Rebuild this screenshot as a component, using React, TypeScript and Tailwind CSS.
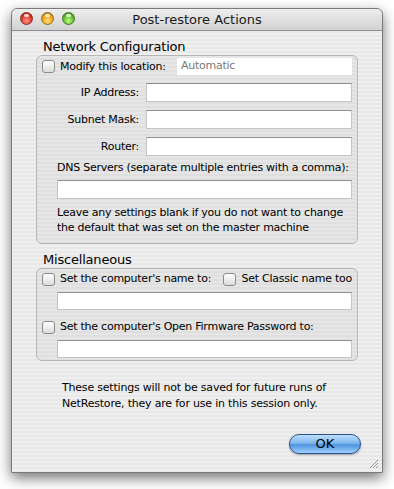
import React from 'react';

// Aqua-style "Post-restore Actions" sheet

const stripes =
  'bg-[repeating-linear-gradient(180deg,#efefef_0px,#efefef_2px,#e8e8e8_2px,#e8e8e8_4px)]';
const groupStripes =
  'bg-[repeating-linear-gradient(180deg,#e6e6e6_0px,#e6e6e6_2px,#dfdfdf_2px,#dfdfdf_4px)]';

function Checkbox() {
  return (
    <span className="inline-block w-[13px] h-[13px] shrink-0 rounded-[3px] border border-[#8a8a8a] bg-gradient-to-b from-[#ffffff] to-[#dcdcdc] shadow-[inset_0_1px_1px_rgba(255,255,255,0.8)]" />
  );
}

function Field({ value, className = '' }: { value?: string; className?: string }) {
  return (
    <div
      className={`bg-white border border-[#c4c4c4] border-t-[#8e8e8e] text-[11px] text-[#7a7a7a] px-[4px] leading-[15px] ${className}`}
    >
      {value}
    </div>
  );
}

function Light({ color }: { color: 'red' | 'orange' | 'green' }) {
  const cls = {
    red: 'bg-[radial-gradient(circle_at_50%_70%,#ff9a8a_0%,#e3352a_55%,#9c1a12_100%)] border-[#8a2a22]',
    orange: 'bg-[radial-gradient(circle_at_50%_70%,#ffe27a_0%,#f0a21e_55%,#a86a08_100%)] border-[#9a6a1a]',
    green: 'bg-[radial-gradient(circle_at_50%_70%,#c8ff8a_0%,#5cbc2a_55%,#2f7a10_100%)] border-[#3a7a22]',
  }[color];
  return (
    <span className={`relative w-[13px] h-[13px] rounded-full border ${cls}`}>
      <span className="absolute left-[3px] top-[1px] w-[5px] h-[3px] rounded-full bg-white/80" />
    </span>
  );
}

export default function App() {
  return (
    <div className="w-[394px] h-[489px] bg-white pt-[8px] pl-[11px] font-['Lucida_Grande','DejaVu_Sans',sans-serif] text-black">
      <div
        className={`relative w-[372px] h-[465px] border border-[#7a7a7a] rounded-t-[6px] shadow-[0_5px_14px_rgba(0,0,0,0.55)] ${stripes} flex flex-col`}
      >
        {/* title bar */}
        <div className="h-[22px] shrink-0 flex items-center relative rounded-t-[6px] border-b border-[#8f8f8f] bg-gradient-to-b from-[#eeeeee] to-[#d2d2d2]">
          <div className="absolute left-[8px] top-[3px] flex gap-[8px]">
            <Light color="red" />
            <Light color="orange" />
            <Light color="green" />
          </div>
          <div className="w-full text-center text-[13px] leading-[16px] text-[#1a1a1a]">Post-restore Actions</div>
        </div>

        <div className="pl-[24px] pr-[24px] flex flex-col">
          <div className="pl-[7px] pt-[8px] text-[13px] leading-[16px] h-[24px] tracking-[-0.2px]">Network Configuration</div>

          <div className={`h-[189px] rounded-[6px] border border-[#b6b6b6] ${groupStripes} pl-[5px] pr-[5px] pt-[2px] flex flex-col text-[11px] tracking-[-0.25px] whitespace-nowrap`}>
            <div className="flex items-center h-[17px]">
              <Checkbox />
              <span className="ml-[5px] w-[117px] leading-[14px]">Modify this location:</span>
              <Field value="Automatic" className="flex-1 h-[17px] border-none" />
            </div>

            {['IP Address:', 'Subnet Mask:', 'Router:'].map((label) => (
              <div key={label} className="flex items-center h-[19px] mt-[8px]">
                <span className="w-[104px] text-right pr-[7px] leading-[14px]">{label}</span>
                <Field className="flex-1 h-[19px]" />
              </div>
            ))}

            <div className="pl-[15px] mt-[5px] leading-[14px]">DNS Servers (separate multiple entries with a comma):</div>
            <Field className="ml-[15px] mt-[5px] h-[19px]" />
            <div className="pl-[15px] mt-[6px] leading-[15px]">
              Leave any settings blank if you do not want to change
              <br />
              the default that was set on the master machine
            </div>
          </div>

          <div className="pl-[7px] pt-[8px] text-[13px] leading-[16px] h-[24px] tracking-[-0.2px]">Miscellaneous</div>

          <div className={`h-[93px] rounded-[6px] border border-[#b6b6b6] ${groupStripes} pl-[5px] pr-[5px] pt-[2px] flex flex-col text-[11px] tracking-[-0.25px] whitespace-nowrap`}>
            <div className="flex items-center h-[16px]">
              <Checkbox />
              <span className="ml-[5px] w-[170px] leading-[14px]">Set the computer's name to:</span>
              <Checkbox />
              <span className="ml-[5px] leading-[14px]">Set Classic name too</span>
            </div>
            <Field className="ml-[15px] mt-[5px] h-[18px]" />
            <div className="flex items-center h-[16px] mt-[9px]">
              <Checkbox />
              <span className="ml-[5px] leading-[14px]">Set the computer's Open Firmware Password to:</span>
            </div>
            <Field className="ml-[15px] mt-[5px] h-[18px]" />
          </div>

          <div className="pl-[26px] mt-[19px] text-[11px] leading-[16px] tracking-[-0.2px] whitespace-nowrap">
            These settings will not be saved for future runs of
            <br />
            NetRestore, they are for use in this session only.
          </div>

          <div className="flex justify-end mt-[22px]">
            <button className="w-[72px] h-[20px] mr-[-3px] rounded-full border border-[#2a4f8f] bg-[linear-gradient(180deg,#bfe0ff_0%,#7fb6ee_45%,#4e93e0_55%,#9fd2ff_100%)] shadow-[0_1px_2px_rgba(0,0,0,0.35)] text-[13px] leading-[18px] text-black">
              OK
            </button>
          </div>
        </div>

        {/* resize grip */}
        <svg className="absolute right-[3px] bottom-[3px]" width="11" height="11" viewBox="0 0 11 11">
          <path d="M10 2 L2 10 M10 5 L5 10 M10 8 L8 10" stroke="#8a8a8a" strokeWidth="1" />
          <path d="M10 3 L3 10 M10 6 L6 10 M10 9 L9 10" stroke="#ffffff" strokeWidth="1" />
        </svg>
      </div>
    </div>
  );
}
